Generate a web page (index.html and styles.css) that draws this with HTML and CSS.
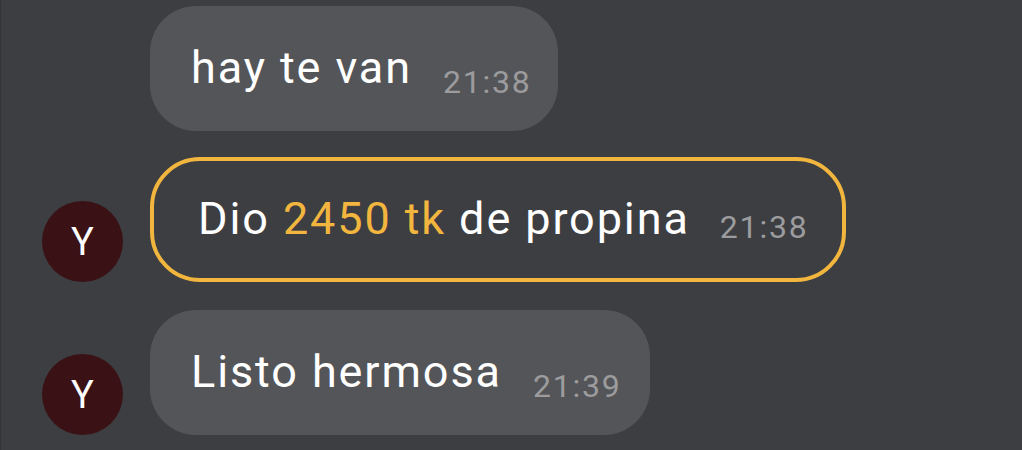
FILE: index.html
```html
<!DOCTYPE html>
<html lang="es">
<head>
<meta charset="utf-8">
<link rel="stylesheet" href="styles.css">
</head>
<body>
<div class="chat">
  <div class="row">
    <div class="avatar-slot"></div>
    <div class="bubble">
      <span class="text">hay te van</span><span class="time">21:38</span>
    </div>
  </div>
  <div class="row">
    <div class="avatar-slot"><div class="avatar">Y</div></div>
    <div class="bubble bubble-tip">
      <span class="text">Dio <span class="amount">2450 tk</span> de propina</span><span class="time time-tip">21:38</span>
    </div>
  </div>
  <div class="row row-last">
    <div class="avatar-slot"><div class="avatar">Y</div></div>
    <div class="bubble bubble-wide">
      <span class="text">Listo hermosa</span><span class="time">21:39</span>
    </div>
  </div>
</div>
</body>
</html>
```
FILE: styles.css
```css
html, body {
  margin: 0;
  padding: 0;
  background: #3d3e42;
  width: 1022px;
  height: 450px;
  overflow: hidden;
}
body {
  font-family: Roboto, "Noto Sans", sans-serif;
  border-left: 1px solid #34353a;
  box-sizing: border-box;
}
.chat {
  display: flex;
  flex-direction: column;
  gap: 26px;
  padding-top: 6px;
}
.row {
  display: flex;
  align-items: flex-end;
}
.row-last {
  margin-top: 2px;
}
.avatar-slot {
  width: 149px;
  flex: none;
  display: flex;
  justify-content: flex-start;
  padding-left: 41px;
  box-sizing: border-box;
}
.avatar {
  width: 81px;
  height: 81px;
  border-radius: 50%;
  background: #3a1215;
  color: #ffffff;
  font-size: 38px;
  display: flex;
  align-items: center;
  justify-content: center;
}
.bubble {
  height: 125px;
  box-sizing: border-box;
  background: #545558;
  border-radius: 46px;
  padding: 39px 26px 0 41px;
  white-space: nowrap;
}
.bubble-wide {
  padding-right: 28px;
}
.text {
  font-size: 45px;
  line-height: 45px;
  color: #ffffff;
  letter-spacing: 1.9px;
}
.time {
  display: inline-block;
  font-size: 32px;
  line-height: 32px;
  color: #9c9c9e;
  letter-spacing: 1.8px;
  margin-left: 31px;
  vertical-align: -10px;
}
.bubble-tip {
  background: #3d3e42;
  border: 4px solid #f2b63f;
  border-radius: 50px;
  padding: 35px 33px 0 44px;
}
.time-tip {
  vertical-align: -4px;
  margin-left: 30px;
}
.amount {
  color: #f2b63f;
}
```
